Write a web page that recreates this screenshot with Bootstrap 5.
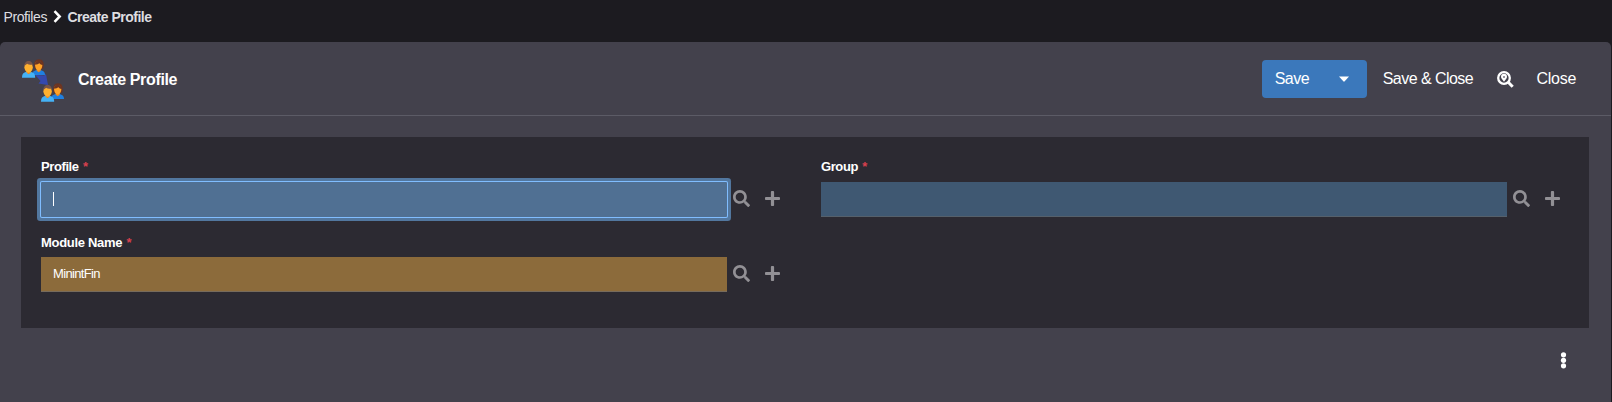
<!DOCTYPE html>
<html lang="en">
<head>
<meta charset="utf-8">
<meta name="viewport" content="width=device-width, initial-scale=1">
<title>Create Profile</title>
<link href="https://cdn.jsdelivr.net/npm/bootstrap@5.3.0/dist/css/bootstrap.min.css" rel="stylesheet">
<style>
body{background:#1c1b20;color:#fff;font-family:"Liberation Sans",Arial,sans-serif;font-size:14px;line-height:20px;overflow:hidden}
.crumbs{height:42px;padding:7px 0 0 3.500px;color:#dedee0;letter-spacing:-.4px}
.crumbs a{color:#dedee0}
.crumbs svg{margin:3px 5px 0 6.500px}
.crumbs b{letter-spacing:-.5px}
.sheet{background:#43414c;height:360px;margin-right:1px;border-radius:5px 5px 0 0}
.sheet-head{height:74px;border-bottom:1px solid #5c5b66;padding:0 35px 0 21px}
.sheet-head h1{font-size:16px;line-height:20px;letter-spacing:-.35px;margin:2px 0 0 13px;font-weight:700}
.tools{font-size:16px;letter-spacing:-.55px;margin-top:1px}
.save{background:#3b78bb;border-radius:4px;width:105px;height:38px}
.plain,.save button{background:none;border:0;color:#fff;padding:0;letter-spacing:inherit}
.pane{background:#2c2a32;margin:21px 22px 0 21px;height:191px;padding:20px 20px 0}
.fields{display:grid;grid-template-columns:780px 748px}
.field{height:75px}
.field label{display:block;font-size:13px;font-weight:700;line-height:20px;letter-spacing:-.4px;margin-bottom:5px}
.fields .field:nth-child(3) label{padding-top:1px;margin-bottom:4px}
.req{color:#d8404e;margin-left:1px}
.field input{width:686px;height:35px;border:0;border-bottom:1px solid #55606b;border-radius:0;outline:0;padding:0 12px 1px;color:#fff;font-size:13px;letter-spacing:-.65px;background:#3f5872}
.field .focused{background:#507093;border-bottom:0;box-shadow:0 0 0 1px #80bdff,0 0 0 4px #52779f;border-radius:1px;caret-color:transparent}
.field .filled{background:#8c6b3b;border-bottom-color:#776b5c}
.pick{position:relative}
.text-cursor{position:absolute;left:12px;top:10px;width:1px;height:14px;background:#fff}
.ic{fill:#929095;margin-bottom:2px}
.ic-find{margin-left:6px}
.ic-add{margin-left:15px}
.foot{padding:24px 44px 0}
</style>
</head>
<body>
<svg width="0" height="0" class="position-absolute" aria-hidden="true">
<defs>
<symbol id="search" viewBox="0 0 512 512"><path d="M505 442.7L405.3 343c-4.500-4.500-10.600-7-17-7H372c27.600-35.300 44-79.700 44-128C416 93.100 322.900 0 208 0S0 93.100 0 208s93.100 208 208 208c48.300 0 92.700-16.400 128-44v16.300c0 6.400 2.500 12.500 7 17l99.700 99.700c9.400 9.400 24.600 9.400 33.900 0l28.300-28.300c9.400-9.400 9.400-24.600.1-34zM208 336c-70.700 0-128-57.200-128-128 0-70.700 57.200-128 128-128 70.700 0 128 57.200 128 128 0 70.700-57.200 128-128 128z"/></symbol>
<symbol id="plus" viewBox="0 0 448 448"><path d="M416 176H272V32c0-17.700-14.300-32-32-32h-32c-17.700 0-32 14.300-32 32v144H32c-17.700 0-32 14.300-32 32v32c0 17.700 14.300 32 32 32h144v144c0 17.700 14.300 32 32 32h32c17.700 0 32-14.300 32-32V272h144c17.700 0 32-14.300 32-32v-32c0-17.700-14.300-32-32-32z"/></symbol>
<symbol id="pair" viewBox="0 0 23 19">
<path d="M10 16c0-3.600 2.500-5 6.500-5s6.500 1.400 6.500 5z" fill="#2080e0"/>
<path d="M12.400 9C11.600 3.500 13 .2 17 .2s5.300 3.300 4.500 8.800l-1.500 1.300h-6z" fill="#6b3523"/>
<path d="M14.700 9h4v2.700l-2 1.600-2-1.600z" fill="#f08a1c"/><ellipse cx="16.700" cy="6.600" rx="3.600" ry="4.700" fill="#ffa226"/><path d="M12.900 5.600c.2-5 7.700-5 7.900.2-2 .1-3-1-3.500-1.900-.8 1.200-2.300 1.700-4.400 1.700z" fill="#6b3523"/>
<path d="M0 18.800c0-4.600 2.300-6 6.500-6s6.700 1.400 6.700 6z" fill="#45b2f6"/><path d="M4.600 11h4v2.700l-2 1.600-2-1.600z" fill="#f08a1c"/><ellipse cx="6.600" cy="8.300" rx="4.200" ry="5.400" fill="#ffb12f"/><path d="M2.300 7.500C1.800 0 11.500 0 10.900 7.500l-1-1.700C7.500 5.800 6 5.200 5.200 4.700L3.200 6.200z" fill="#795548"/>
</symbol>
</defs>
</svg>
<nav class="crumbs d-flex align-items-start" aria-label="breadcrumb">
<a class="text-decoration-none" href="#">Profiles</a>
<svg width="9" height="13" viewBox="0 0 9 13"><path d="M1.500 1.200l5.200 5.300-5.200 5.300" fill="none" stroke="#fff" stroke-width="2.500"/></svg>
<b>Create Profile</b>
</nav>
<main class="sheet">
<header class="sheet-head d-flex align-items-center">
<svg class="mt-1" width="44" height="44" viewBox="0 0 44 44"><path d="M14 16l9 .5 2-1.500 2 11-9.500-1.500 2-2.500-3-3.500z" fill="#3549ad"/><use href="#pair" x="1" y="0" width="23" height="19"/><use href="#pair" x="20" y="24" width="23" height="19"/></svg>
<h1>Create Profile</h1>
<div class="tools d-flex align-items-center ms-auto">
<div class="save d-flex align-items-center">
<button style="margin-left:12.500px">Save</button>
<button class="d-flex ms-auto" style="margin-right:18px" aria-label="More"><svg width="10" height="6" viewBox="0 0 10 6"><path d="M0 .5h10l-4.300 4.800q-.7.700-1.400 0z" fill="#fff"/></svg></button>
</div>
<button class="plain" style="margin-left:15.500px">Save &amp; Close</button>
<button class="plain d-flex" style="margin-left:23.500px" aria-label="Inspect"><svg width="17" height="17" viewBox="0 0 17 17"><circle cx="7" cy="7" r="5.800" fill="none" stroke="#fff" stroke-width="2.300"/><path d="M11 11l4.700 4.700" stroke="#fff" stroke-width="3"/><path d="M7 10.800C5 8.300 4 7.200 4 5.800a3 3 0 0 1 6 0C10 7.200 9 8.300 7 10.800z" fill="#fff"/><circle cx="7" cy="5.900" r="1" fill="#777580"/></svg></button>
<button class="plain" style="margin-left:23px;letter-spacing:-.3px">Close</button>
</div>
</header>
<section class="pane">
<div class="fields">
<div class="field"><label for="profile">Profile <span class="req">*</span></label><div class="pick d-flex align-items-center"><input id="profile" class="focused"><span class="text-cursor"></span><svg class="ic ic-find" width="17" height="17"><use href="#search"/></svg><svg class="ic ic-add" width="15" height="15"><use href="#plus"/></svg></div></div>
<div class="field"><label for="group">Group <span class="req">*</span></label><div class="pick d-flex align-items-center"><input id="group"><svg class="ic ic-find" width="17" height="17"><use href="#search"/></svg><svg class="ic ic-add" width="15" height="15"><use href="#plus"/></svg></div></div>
<div class="field"><label for="module" style="letter-spacing:-.3px">Module Name <span class="req">*</span></label><div class="pick d-flex align-items-center"><input id="module" class="filled" value="MinintFin"><svg class="ic ic-find" width="17" height="17"><use href="#search"/></svg><svg class="ic ic-add" width="15" height="15"><use href="#plus"/></svg></div></div>
</div>
</section>
<div class="foot d-flex justify-content-end"><svg width="7" height="17" viewBox="0 0 7 17" fill="#fff"><circle cx="3.500" cy="2.800" r="2.600"/><circle cx="3.500" cy="8.300" r="2.600"/><circle cx="3.500" cy="13.800" r="2.600"/></svg></div>
</main>
<script src="https://cdn.jsdelivr.net/npm/bootstrap@5.3.0/dist/js/bootstrap.bundle.min.js"></script>
</body>
</html>
